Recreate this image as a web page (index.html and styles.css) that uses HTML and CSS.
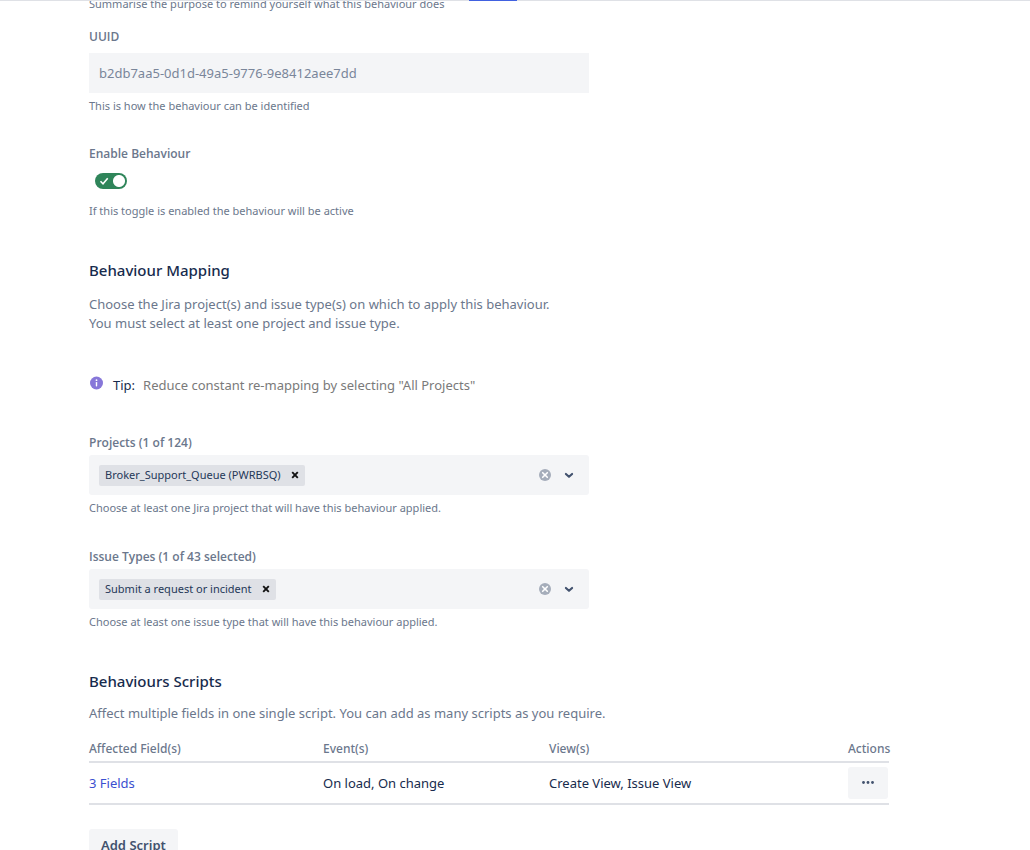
FILE: index.html
```html
<!DOCTYPE html>
<html lang="en">
<head>
    <meta charset="UTF-8">
    <meta name="viewport" content="width=device-width, initial-scale=1.0">
    <title>Edit Behaviour</title>
    <link rel="stylesheet" href="styles.css">
</head>
<body>
    <header class="tab-bar">
        <div class="tab-active"></div>
    </header>

    <main class="content">
        <form class="behaviour-form">
            <p class="help help-first">Summarise the purpose to remind yourself what this behaviour does</p>

            <div class="field field-uuid">
                <label class="label" for="uuid">UUID</label>
                <input class="text-input" type="text" id="uuid" value="b2db7aa5-0d1d-49a5-9776-9e8412aee7dd" readonly>
                <p class="help">This is how the behaviour can be identified</p>
            </div>

            <div class="field field-toggle">
                <label class="label" for="enabled">Enable Behaviour</label>
                <div class="toggle">
                    <input type="checkbox" id="enabled" checked>
                    <svg class="toggle-check" viewBox="0 0 10 10" width="10" height="10">
                        <path d="M1.5 5.2 4 7.7 8.7 2.2" fill="none" stroke="#fff" stroke-width="1.6"/>
                    </svg>
                </div>
                <p class="help">If this toggle is enabled the behaviour will be active</p>
            </div>

            <section class="mapping">
                <h2>Behaviour Mapping</h2>
                <p class="description">Choose the Jira project(s) and issue type(s) on which to apply this behaviour.<br>You must select at least one project and issue type.</p>

                <div class="tip">
                    <svg class="tip-icon" viewBox="0 0 14 14" width="14" height="14">
                        <circle cx="7.5" cy="7" r="6.5" fill="#8777d9"/>
                        <circle cx="7.5" cy="4.2" r=".9" fill="#fff"/>
                        <rect x="6.8" y="6" width="1.4" height="4.4" rx=".6" fill="#fff"/>
                    </svg>
                    <strong>Tip:</strong>
                    <span>Reduce constant re-mapping by selecting "All Projects"</span>
                </div>

                <div class="field field-projects">
                    <label class="label" for="projects">Projects (1 of 124)</label>
                    <div class="multi-select">
                        <span class="tag">Broker_Support_Queue (PWRBSQ)
                            <button type="button" aria-label="Remove">
                                <svg viewBox="0 0 8 8" width="8" height="8"><path d="M1.2 1.2 6.8 6.8M6.8 1.2 1.2 6.8" stroke="#111" stroke-width="1.9"/></svg>
                            </button>
                        </span>
                        <input type="text" id="projects" role="combobox" aria-expanded="false">
                        <button type="button" class="indicator" aria-label="Clear">
                            <svg viewBox="0 0 12 12" width="12" height="12">
                                <circle cx="6" cy="6" r="6" fill="#a5adba"/>
                                <path d="M3.7 3.7 8.3 8.3M8.3 3.7 3.7 8.3" stroke="#fff" stroke-width="1.6" stroke-linecap="round"/>
                            </svg>
                        </button>
                        <button type="button" class="indicator" aria-label="Open">
                            <svg viewBox="0 0 12 12" width="12" height="12"><path d="M2.9 4.9 6 7.8 9.1 4.9" fill="none" stroke="#42526e" stroke-width="2.1" stroke-linecap="round" stroke-linejoin="round"/></svg>
                        </button>
                    </div>
                    <p class="help">Choose at least one Jira project that will have this behaviour applied.</p>
                </div>

                <div class="field field-issues">
                    <label class="label" for="issue-types">Issue Types (1 of 43 selected)</label>
                    <div class="multi-select">
                        <span class="tag">Submit a request or incident
                            <button type="button" aria-label="Remove">
                                <svg viewBox="0 0 8 8" width="8" height="8"><path d="M1.2 1.2 6.8 6.8M6.8 1.2 1.2 6.8" stroke="#111" stroke-width="1.9"/></svg>
                            </button>
                        </span>
                        <input type="text" id="issue-types" role="combobox" aria-expanded="false">
                        <button type="button" class="indicator" aria-label="Clear">
                            <svg viewBox="0 0 12 12" width="12" height="12">
                                <circle cx="6" cy="6" r="6" fill="#a5adba"/>
                                <path d="M3.7 3.7 8.3 8.3M8.3 3.7 3.7 8.3" stroke="#fff" stroke-width="1.6" stroke-linecap="round"/>
                            </svg>
                        </button>
                        <button type="button" class="indicator" aria-label="Open">
                            <svg viewBox="0 0 12 12" width="12" height="12"><path d="M2.9 4.9 6 7.8 9.1 4.9" fill="none" stroke="#42526e" stroke-width="2.1" stroke-linecap="round" stroke-linejoin="round"/></svg>
                        </button>
                    </div>
                    <p class="help">Choose at least one issue type that will have this behaviour applied.</p>
                </div>
            </section>

            <section class="scripts">
                <h2>Behaviours Scripts</h2>
                <p class="description">Affect multiple fields in one single script. You can add as many scripts as you require.</p>
                <table class="scripts-table">
                    <thead>
                        <tr>
                            <th class="col-fields">Affected Field(s)</th>
                            <th class="col-events">Event(s)</th>
                            <th>View(s)</th>
                            <th class="col-actions">Actions</th>
                        </tr>
                    </thead>
                    <tbody>
                        <tr>
                            <td><a href="#">3 Fields</a></td>
                            <td>On load, On change</td>
                            <td>Create View, Issue View</td>
                            <td>
                                <button type="button" class="btn btn-more" aria-label="More actions">
                                    <svg viewBox="0 0 14 4" width="14" height="4" fill="#42526e">
                                        <circle cx="2.5" cy="1.5" r="1.4"/>
                                        <circle cx="7" cy="1.5" r="1.4"/>
                                        <circle cx="11.5" cy="1.5" r="1.4"/>
                                    </svg>
                                </button>
                            </td>
                        </tr>
                    </tbody>
                </table>
                <button type="button" class="btn btn-add">Add Script</button>
            </section>
        </form>
    </main>
</body>
</html>
```
FILE: styles.css
```css
* {
    box-sizing: border-box;
}

body {
    font-family: 'Segoe UI', 'Noto Sans', sans-serif;
    font-size: 13px;
    line-height: 19px;
    margin: 0;
    height: 100vh;
    overflow: hidden;
    background-color: #fff;
    color: #172b4d;
}

h2, p {
    margin: 0;
}

button, input {
    font-family: inherit;
    border: none;
    padding: 0;
}

button {
    cursor: pointer;
}

.tab-bar {
    height: 1px;
    background-color: #dfe1e6;
    padding-left: 469px;
}

.tab-active {
    width: 48px;
    height: 1px;
    background-color: #4161e0;
}

.content {
    height: calc(100vh - 1px);
    overflow: hidden;
    padding: 0 89px;
}

.behaviour-form {
    max-width: 800px;
    margin-top: -5px;
}

.label {
    display: block;
    font-family: 'Segoe UI', 'Open Sans', sans-serif;
    font-size: 12px;
    font-weight: 600;
    line-height: 16px;
    color: #6b778c;
}

.help {
    font-size: 11px;
    line-height: 16px;
    color: #6b778c;
    margin-top: 5px;
}

.help-first {
    margin-top: 0;
}

.field {
    max-width: 500px;
}

.field-uuid {
    margin-top: 17px;
}

.text-input {
    display: block;
    width: 100%;
    height: 40px;
    margin-top: 8px;
    padding: 0 10px;
    background-color: #f4f5f7;
    font-size: 13px;
    color: #7a869a;
}

.field-toggle {
    margin-top: 32px;
}

.toggle {
    display: grid;
    width: 32px;
    margin: 11px 6px 14px;
}

.toggle input {
    appearance: none;
    grid-area: 1 / 1;
    width: 32px;
    height: 16px;
    margin: 0;
    border-radius: 8px;
    background: radial-gradient(circle at 24px 8px, #fff 5.5px, #2f855a 6.5px);
}

.toggle-check {
    grid-area: 1 / 1;
    align-self: center;
    margin-left: 4px;
    pointer-events: none;
}

.mapping {
    margin-top: 41px;
}

h2 {
    font-size: 15px;
    font-weight: 500;
    line-height: 20px;
    color: #172b4d;
}

.description {
    margin-top: 15px;
    color: #6b778c;
}

.tip {
    display: flex;
    margin-top: 43px;
    color: #7a7a7a;
}

.tip-icon {
    margin-right: 10px;
}

.tip strong {
    font-weight: 400;
    color: #172b4d;
    margin-right: 8px;
}

.field-projects {
    margin-top: 40px;
}

.field-issues {
    margin-top: 33px;
}

.multi-select {
    display: flex;
    align-items: center;
    height: 40px;
    margin-top: 4px;
    padding: 0 8px 0 10px;
    background-color: #f4f5f7;
    border-radius: 3px;
}

.multi-select input {
    flex: 1;
    min-width: 0;
    background: none;
    outline: none;
}

.multi-select button {
    display: flex;
    align-items: center;
    justify-content: center;
    background: none;
}

.tag {
    display: flex;
    align-items: center;
    height: 21px;
    padding-left: 6px;
    background-color: #dfe1e6;
    border-radius: 2px;
    font-size: 11px;
    line-height: 16px;
    color: #253858;
}

.tag button {
    width: 20px;
    margin-left: 4px;
}

.indicator {
    width: 24px;
    height: 24px;
}

.scripts {
    margin-top: 41px;
}

.scripts .description {
    margin-top: 13px;
}

.scripts-table {
    width: 100%;
    margin-top: 18px;
    border-collapse: separate;
    border-spacing: 0;
    table-layout: fixed;
}

.scripts-table th {
    padding: 0 0 4px;
    border-bottom: 2px solid #dfe1e6;
    font-size: 12px;
    font-weight: 500;
    line-height: 16px;
    text-align: left;
    color: #6b778c;
}

.scripts-table td {
    height: 42px;
    padding: 0;
    border-bottom: 2px solid #dfe1e6;
}

.col-fields {
    width: 234px;
}

.col-events {
    width: 226px;
}

.col-actions {
    width: 41px;
}

.scripts-table a {
    color: #3b4fd0;
    text-decoration: none;
}

.btn {
    height: 32px;
    background-color: #f4f5f7;
    border-radius: 3px;
    color: #42526e;
}

.btn-more {
    display: flex;
    align-items: center;
    justify-content: center;
    width: 40px;
}

.btn-add {
    margin-top: 24px;
    padding: 0 12px;
    font-size: 13px;
    font-weight: 600;
}
```
